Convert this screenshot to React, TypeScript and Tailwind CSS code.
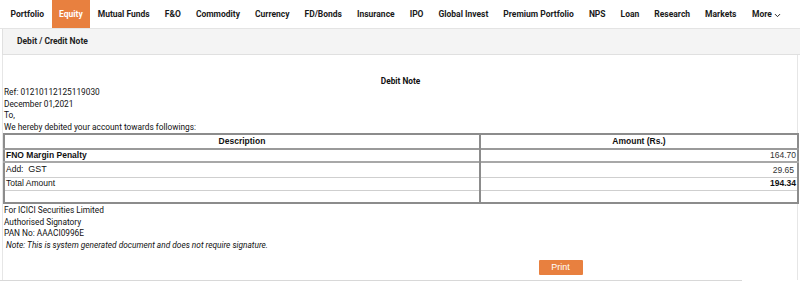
import { ChevronDown } from "lucide-react";

const navItems = [
  "Portfolio",
  "Equity",
  "Mutual Funds",
  "F&O",
  "Commodity",
  "Currency",
  "FD/Bonds",
  "Insurance",
  "IPO",
  "Global Invest",
  "Premium Portfolio",
  "NPS",
  "Loan",
  "Research",
  "Markets",
];

export default function App() {
  return (
    <div className="w-[800px] h-[282px] bg-white overflow-hidden font-['Roboto',sans-serif] text-[#111]">
      {/* top nav */}
      <div className="flex h-[29px] pl-[3px] border-b border-[#e4e4e4] whitespace-nowrap">
        {navItems.map((item) => (
          <div
            key={item}
            className={
              item === "Equity"
                ? "shrink-0 flex items-center px-[7.5px] bg-[#e8803f] text-white text-[8.5px] font-bold"
                : "shrink-0 flex items-center px-[7.5px] text-[#1a1a1a] text-[8.5px] font-bold"
            }
          >
            {item}
          </div>
        ))}
        <div className="shrink-0 flex items-center pl-[8px] text-[#1a1a1a] text-[8.5px] font-bold">
          More
          <ChevronDown className="size-[9px] ml-[1px] mt-[2px]" strokeWidth={2.5} />
        </div>
      </div>

      {/* page header */}
      <div className="ml-[2px] h-[26px] flex items-center pl-[14px] bg-[#f4f4f4] border-l border-b border-[#e0e0e0] text-[8.5px] font-bold text-[#222]">
        Debit / Credit Note
      </div>

      {/* note body */}
      <div className="ml-[2px] mr-[2px] border-l border-r border-[#e6e6e6] pl-[1px] text-[8.3px] leading-[11.4px]">
        <div className="text-center font-bold pt-[21px]">Debit Note</div>
        <div>Ref: 01210112125119030</div>
        <div>December 01,2021</div>
        <div>To,</div>
        <div>We hereby debited your account towards followings:</div>

        <table className="w-[796px] border-collapse border-2 border-[#8c8c8c] -ml-[1px] font-['Liberation_Sans',Arial,sans-serif] text-[8.5px]">
          <tbody>
            <tr className="h-[15px] border-b-2 border-[#9a9a9a]">
              <td className="w-[476px] text-center font-bold border-r-2 border-[#8c8c8c]">Description</td>
              <td className="text-center font-bold">Amount (Rs.)</td>
            </tr>
            <tr className="h-[13px] border-b-2 border-[#a8a8a8]">
              <td className="font-bold pl-[1px] border-r-2 border-[#8c8c8c]">FNO Margin Penalty</td>
              <td className="text-right text-[#333] pr-[1px]">164.70</td>
            </tr>
            <tr className="h-[13px] border-b border-[#cfcfcf]">
              <td className="pl-[1px] border-r-2 border-[#8c8c8c]">
                Add:&nbsp; <span className="text-[9px]">GST</span>
              </td>
              <td className="text-right text-[#333] pr-[3px] pt-[2px]">29.65</td>
            </tr>
            <tr className="h-[13px] border-b border-[#cfcfcf]">
              <td className="pl-[1px] border-r-2 border-[#8c8c8c]">Total Amount</td>
              <td className="text-right font-bold pr-[1px]">194.34</td>
            </tr>
            <tr className="h-[13px]">
              <td className="border-r-2 border-[#8c8c8c]"></td>
              <td></td>
            </tr>
          </tbody>
        </table>

        <div className="pt-[1px]">For ICICI Securities Limited</div>
        <div>Authorised Signatory</div>
        <div>PAN No: AAACI0996E</div>
        <div className="italic pl-[2px]">
          Note: This is system generated document and does not require signature.
        </div>

        <div className="flex justify-center pl-[320px] pt-[9px] pb-[5px]">
          <button className="w-[44px] h-[15px] bg-[#e8803f] text-white text-[9px] rounded-[1px] flex items-center justify-center font-['Liberation_Sans',Arial,sans-serif]">
            Print
          </button>
        </div>
      </div>
      <div className="w-[742px] border-b border-[#d8d8d8]"></div>
    </div>
  );
}
